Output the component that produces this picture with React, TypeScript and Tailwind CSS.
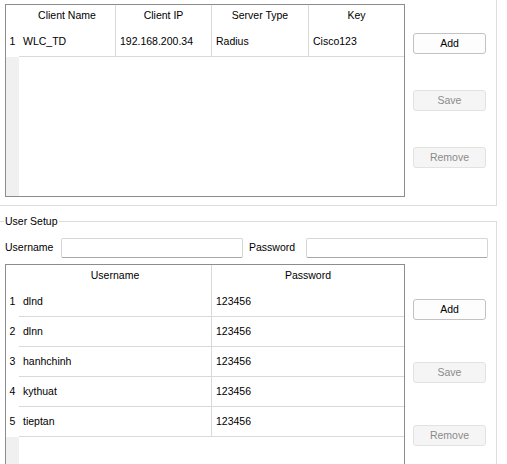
import React from 'react';

type Col = { title: string; w: string };

function Grid({ cols, rows, height }: { cols: Col[]; rows: string[][]; height: string }) {
    return (
        <div className={`w-[400px] ${height} border border-[#8c8c8c] flex flex-col bg-white shrink-0`}>
            <div className="flex h-[22px] shrink-0">
                <div className="w-[13px] shrink-0" />
                {cols.map((c, i) => (
                    <div
                        key={c.title}
                        className={`${c.w} flex items-center justify-center ${i < cols.length - 1 ? 'border-r border-[#d9d9d9]' : ''}`}
                    >
                        {c.title}
                    </div>
                ))}
            </div>
            {rows.map((r, ri) => (
                <div key={ri} className="flex h-[30px] shrink-0">
                    <div className="w-[13px] shrink-0 flex items-center justify-center">{ri + 1}</div>
                    {r.map((v, i) => (
                        <div
                            key={i}
                            className={`${cols[i].w} flex items-center pl-[4px] border-b border-[#d9d9d9] ${i < cols.length - 1 ? 'border-r' : ''}`}
                        >
                            {v}
                        </div>
                    ))}
                </div>
            ))}
            <div className="flex-1 flex">
                <div className="w-[13px] bg-[#f0f0f0]" />
            </div>
        </div>
    );
}

function Btn({ label, disabled, className }: { label: string; disabled?: boolean; className?: string }) {
    return (
        <button
            className={`w-[73px] h-[21px] rounded-[3px] border flex items-center justify-center ${
                disabled ? 'bg-[#f5f5f5] border-[#e2e2e2] text-[#8a8a8a]' : 'bg-[#fdfdfd] border-[#c2c2c2] text-black'
            } ${className || ''}`}
        >
            {label}
        </button>
    );
}

export default function App() {
    const clientCols: Col[] = [
        { title: 'Client Name', w: 'w-[97px]' },
        { title: 'Client IP', w: 'w-[96px]' },
        { title: 'Server Type', w: 'w-[97px]' },
        { title: 'Key', w: 'flex-1' },
    ];
    const userCols: Col[] = [
        { title: 'Username', w: 'w-[193px]' },
        { title: 'Password', w: 'flex-1' },
    ];
    const users = ['dlnd', 'dlnn', 'hanhchinh', 'kythuat', 'tieptan'].map(u => [u, '123456']);

    return (
        <div className="w-[507px] h-[464px] overflow-hidden bg-white text-black text-[10.5px] font-['Liberation_Sans',Arial,sans-serif]">
            {/* top panel */}
            <div className="w-[497px] h-[206px] border-r border-b border-[#dcdcdc] flex pt-[4px] pl-[5px]">
                <Grid cols={clientCols} rows={[['WLC_TD', '192.168.200.34', 'Radius', 'Cisco123']]} height="h-[193px]" />
                <div className="ml-[8px] pt-[29px] flex flex-col">
                    <Btn label="Add" />
                    <Btn label="Save" disabled className="mt-[36px]" />
                    <Btn label="Remove" disabled className="mt-[36px]" />
                </div>
            </div>

            {/* user setup group */}
            <div className="relative w-[497px] h-[260px] mt-[15px] border-t border-r border-[#dcdcdc]">
                <span className="absolute left-[4px] -top-[8px] bg-white px-[1px] leading-[14px]">User Setup</span>
                <div className="flex items-center pl-[5px] pt-[16px]">
                    <span className="w-[56px]">Username</span>
                    <input className="w-[182px] h-[20px] border border-[#d6d6d6] border-b-[#a8a8a8] rounded-[2px] bg-white outline-none" />
                    <span className="ml-[6px] w-[57px]">Password</span>
                    <input className="w-[182px] h-[20px] border border-[#d6d6d6] border-b-[#a8a8a8] rounded-[2px] bg-white outline-none" />
                </div>
                <div className="flex pl-[5px] mt-[6px]">
                    <Grid cols={userCols} rows={users} height="h-[240px]" />
                    <div className="ml-[8px] pt-[35px] flex flex-col">
                        <Btn label="Add" />
                        <Btn label="Save" disabled className="mt-[42px]" />
                        <Btn label="Remove" disabled className="mt-[42px]" />
                    </div>
                </div>
            </div>
        </div>
    );
}
